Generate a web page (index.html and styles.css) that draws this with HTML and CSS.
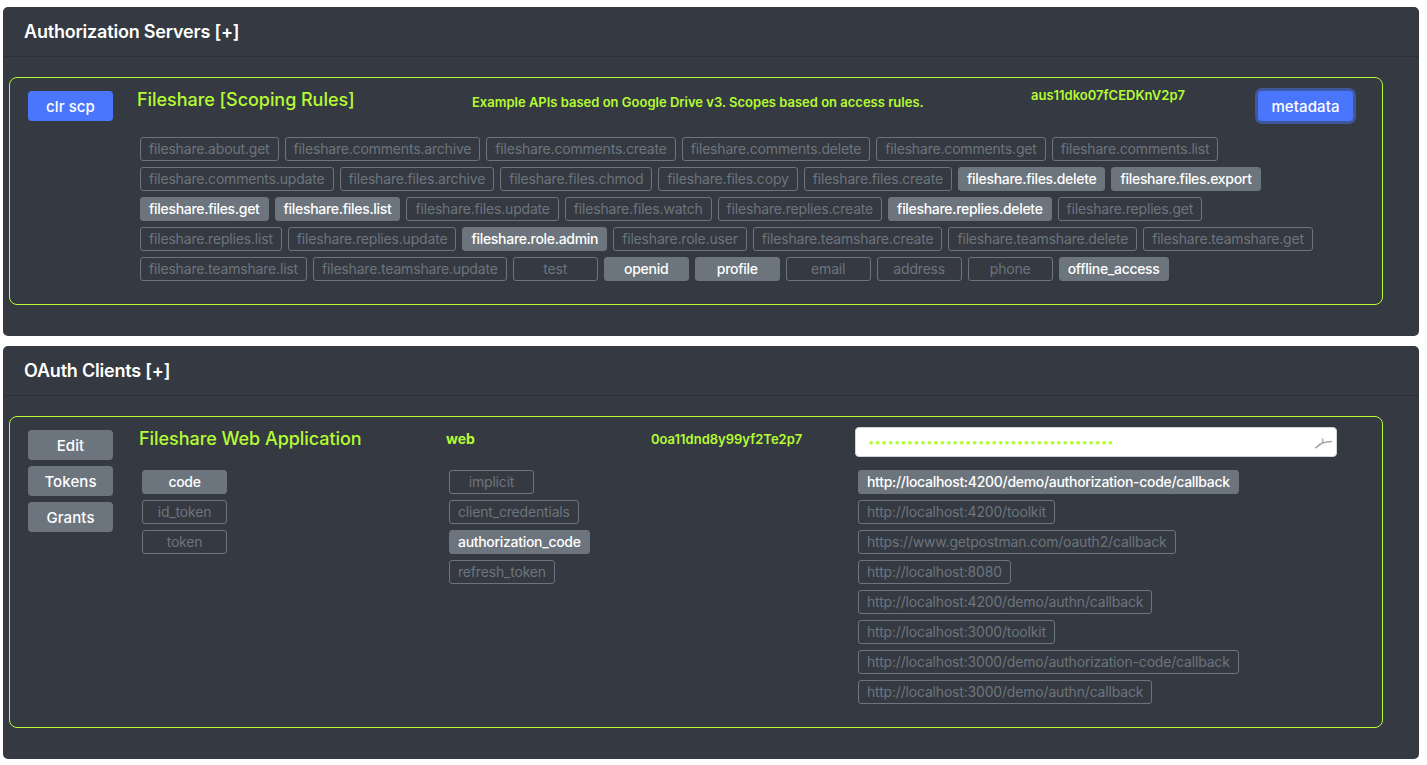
FILE: index.html
```html
<!doctype html>
<html lang="en">
<head>
  <meta charset="utf-8"/>
  <title>Authorization Servers</title>
  <meta name="viewport" content="width=device-width, initial-scale=1"/>
  <link rel="stylesheet" href="styles.css">
</head>
<body>

  <section class="card card-servers">
    <h2 class="card-title">Authorization Servers [+]</h2>
    <div class="box box-server">
      <div class="side"><button class="btn btn-blue">clr scp</button></div>
      <div class="main">
        <div class="head head-server">
          <h3 class="name">Fileshare [Scoping Rules]</h3>
          <div class="desc">Example APIs based on Google Drive v3. Scopes based on access rules.</div>
          <div class="ident">aus11dko07fCEDKnV2p7</div>
          <button class="btn btn-blue btn-focus">metadata</button>
        </div>
        <div class="tags tags-scopes">
          <span class="tag">fileshare.about.get</span>
          <span class="tag">fileshare.comments.archive</span>
          <span class="tag">fileshare.comments.create</span>
          <span class="tag">fileshare.comments.delete</span>
          <span class="tag">fileshare.comments.get</span>
          <span class="tag">fileshare.comments.list</span>
          <span class="tag">fileshare.comments.update</span>
          <span class="tag">fileshare.files.archive</span>
          <span class="tag">fileshare.files.chmod</span>
          <span class="tag">fileshare.files.copy</span>
          <span class="tag">fileshare.files.create</span>
          <span class="tag on">fileshare.files.delete</span>
          <span class="tag on">fileshare.files.export</span>
          <span class="tag on">fileshare.files.get</span>
          <span class="tag on">fileshare.files.list</span>
          <span class="tag">fileshare.files.update</span>
          <span class="tag">fileshare.files.watch</span>
          <span class="tag">fileshare.replies.create</span>
          <span class="tag on">fileshare.replies.delete</span>
          <span class="tag">fileshare.replies.get</span>
          <span class="tag">fileshare.replies.list</span>
          <span class="tag">fileshare.replies.update</span>
          <span class="tag on">fileshare.role.admin</span>
          <span class="tag">fileshare.role.user</span>
          <span class="tag">fileshare.teamshare.create</span>
          <span class="tag">fileshare.teamshare.delete</span>
          <span class="tag">fileshare.teamshare.get</span>
          <span class="tag">fileshare.teamshare.list</span>
          <span class="tag">fileshare.teamshare.update</span>
          <span class="tag">test</span>
          <span class="tag on">openid</span>
          <span class="tag on">profile</span>
          <span class="tag">email</span>
          <span class="tag">address</span>
          <span class="tag">phone</span>
          <span class="tag on">offline_access</span>
        </div>
      </div>
    </div>
  </section>

  <section class="card card-clients">
    <h2 class="card-title">OAuth Clients [+]</h2>
    <div class="box box-client">
      <div class="side">
        <button class="btn btn-gray">Edit</button>
        <button class="btn btn-gray">Tokens</button>
        <button class="btn btn-gray">Grants</button>
      </div>
      <div class="main">
        <div class="head head-client">
          <h3 class="name">Fileshare Web Application</h3>
          <div class="desc">web</div>
          <div class="ident">0oa11dnd8y99yf2Te2p7</div>
          <div class="secret">
            <input class="secret-input" type="password" value="00000000000000000000000000000000000000" readonly>
            <svg class="secret-icon" width="22" height="14" viewBox="0 0 22 14">
              <path d="M3 12 C6 10.500 9 8.500 11 6 L10.500 2.500 M6 9.500 C8 7.500 13 6 20 5.500" fill="none" stroke="#a9a9a9" stroke-width="1.400"/>
            </svg>
          </div>
        </div>
        <div class="grants">
          <div class="tags tags-col col-types">
            <span class="tag on">code</span>
            <span class="tag">id_token</span>
            <span class="tag">token</span>
          </div>
          <div class="tags tags-col col-flows">
            <span class="tag">implicit</span>
            <span class="tag">client_credentials</span>
            <span class="tag on">authorization_code</span>
            <span class="tag">refresh_token</span>
          </div>
          <div class="tags tags-col col-urls">
            <span class="tag on">http://localhost:4200/demo/authorization-code/callback</span>
            <span class="tag">http://localhost:4200/toolkit</span>
            <span class="tag">https://www.getpostman.com/oauth2/callback</span>
            <span class="tag">http://localhost:8080</span>
            <span class="tag">http://localhost:4200/demo/authn/callback</span>
            <span class="tag">http://localhost:3000/toolkit</span>
            <span class="tag">http://localhost:3000/demo/authorization-code/callback</span>
            <span class="tag">http://localhost:3000/demo/authn/callback</span>
          </div>
        </div>
      </div>
    </div>
  </section>

</body>
</html>
```

FILE: styles.css
```css
:root{--bg:#353941;--lime:#b4fb35;--gray:#6c757d;--blue:#4a76fd}
*{box-sizing:border-box}
body{margin:0;padding:7px 8px 0 3px;background:#fff;font-family:Inter,'Noto Sans',sans-serif;color:#fff}

.card{background:var(--bg);border-radius:5px;margin-bottom:10px;overflow:hidden}
.card-servers{height:329px}
.card-clients{height:413px}
.card-title{margin:0;height:50px;padding:0 21px;font-size:18px;line-height:49px;font-weight:600;letter-spacing:-.2px;border-bottom:1px solid #2c3036}

.box{display:flex;margin:20px 36px 0 6px;padding:13px 0 0 18px;border:1px solid var(--lime);border-radius:8px}
.box-server{height:228px}
.box-client{height:312px}
.side{width:85px;flex:none;display:flex;flex-direction:column;gap:6px}
.main{flex:1;min-width:0}

.btn{height:30px;width:85px;padding:0;border:none;border-radius:4px;color:#fff;font:500 15px Inter,sans-serif;letter-spacing:.1px}
.btn-blue{background:var(--blue)}
.btn-gray{background:var(--gray)}
.btn-focus{width:95px;box-shadow:0 0 0 3px #4a76fd80}

.head{display:flex;color:var(--lime)}
.head-server{height:46px;padding-left:24px}
.head-client{height:40px;padding-left:26px}
.name{margin:0;font-size:18px;line-height:18px;font-weight:500;letter-spacing:-.05px}
.head-server .name{width:335px}
.head-client .name{width:307px}
.desc,.ident{font-size:13px;font-weight:600;line-height:14px}
.head-server .desc{width:559px;padding-top:4px}
.head-server .ident{width:227px;margin-top:-3px}
.head-client .desc{width:205px;margin-top:2px;font-size:14px;font-weight:700}
.head-client .ident{width:204px;margin-top:2px}

.secret{position:relative;width:482px;height:30px;margin-top:-3px}
.secret-input{display:block;width:100%;height:100%;padding:0 12px;border:1px solid #ced4da;border-radius:4px;background:#fff;color:var(--lime);font:11.500px Inter,sans-serif;outline:none}
.secret-icon{position:absolute;right:3px;top:9px}

.tags{display:flex;flex-wrap:wrap;gap:6px;padding-left:27px;width:1230px}
.tag{display:block;height:24px;min-width:85px;padding:0 8px;border:1px solid var(--gray);border-radius:3px;color:var(--gray);font-size:14px;line-height:22px;text-align:center;white-space:nowrap;letter-spacing:-.18px}
.tag.on{background:var(--gray);color:#fff;font-weight:500;letter-spacing:-.3px}

.grants{display:flex}
.tags-col{flex-direction:column;flex-wrap:nowrap;align-items:flex-start;padding-left:0;width:auto}
.col-types{margin-left:29px;width:307px}
.col-flows{width:409px}
```
